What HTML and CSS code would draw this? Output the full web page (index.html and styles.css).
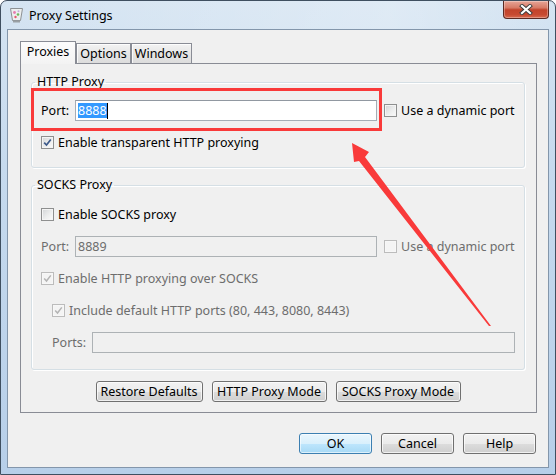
FILE: index.html
```html
<!DOCTYPE html>
<html>
<head>
<meta charset="utf-8">
<title>Proxy Settings</title>
<link rel="stylesheet" href="styles.css">
</head>
<body>
<div class="window">
  <div class="titlebar">
    <svg class="app-icon" width="13" height="16" viewBox="0 0 13 16">
      <path d="M0.5 1.5 L12.5 1.5 L10.5 13.5 L2.5 13.5 Z" fill="#ecefef" stroke="#8d9194"/>
      <rect x="3" y="13.5" width="7" height="2" fill="#9aa0a4"/>
      <circle cx="4.5" cy="5.5" r="1.4" fill="#e77fb0"/>
      <circle cx="8" cy="7.5" r="1.3" fill="#6dbb5b"/>
      <circle cx="5.5" cy="10" r="1.2" fill="#e55a6b"/>
      <circle cx="8.5" cy="4.2" r="1" fill="#c7a8d9"/>
    </svg>
    <span class="title">Proxy Settings</span>
    <div class="close">
      <svg width="14" height="11" viewBox="0 0 14 11">
        <path d="M3 2 L11 9 M11 2 L3 9" stroke="#3b3b3b" stroke-width="4" stroke-linecap="square"/>
        <path d="M3 2 L11 9 M11 2 L3 9" stroke="#ffffff" stroke-width="2.2" stroke-linecap="square"/>
      </svg>
    </div>
  </div>

  <div class="client">
    <div class="tabs">
      <div class="tabbar">
        <div class="tab active tab-proxies">Proxies</div>
        <div class="tab tab-options">Options</div>
        <div class="tab tab-windows">Windows</div>
      </div>
      <div class="pane">
        <fieldset class="group group-http">
          <legend>HTTP Proxy</legend>
          <div class="group-body">
            <div class="row">
              <span class="lbl lbl-port">Port:</span>
              <div class="input input-port"><span class="sel">8888</span><span class="caret"></span></div>
              <span class="cb cb-after"></span>
              <span class="cb-text">Use a dynamic port</span>
            </div>
            <div class="row">
              <span class="cb checked"><svg viewBox="0 0 11 11" width="11" height="11"><path d="M2.2 5.6 L4.5 8 L8.8 2.4" fill="none" stroke="#3d5a8a" stroke-width="1.7"/></svg></span>
              <span class="cb-text">Enable transparent HTTP proxying</span>
            </div>
          </div>
        </fieldset>

        <fieldset class="group group-socks">
          <legend>SOCKS Proxy</legend>
          <div class="group-body">
            <div class="row">
              <span class="cb"></span>
              <span class="cb-text">Enable SOCKS proxy</span>
            </div>
            <div class="row disabled">
              <span class="lbl lbl-port">Port:</span>
              <div class="input input-port">8889</div>
              <span class="cb cb-after"></span>
              <span class="cb-text">Use a dynamic port</span>
            </div>
            <div class="row disabled">
              <span class="cb checked"><svg viewBox="0 0 11 11" width="11" height="11"><path d="M2.2 5.6 L4.5 8 L8.8 2.4" fill="none" stroke="#b4b4b4" stroke-width="1.5"/></svg></span>
              <span class="cb-text">Enable HTTP proxying over SOCKS</span>
            </div>
            <div class="row disabled indent">
              <span class="cb checked"><svg viewBox="0 0 11 11" width="11" height="11"><path d="M2.2 5.6 L4.5 8 L8.8 2.4" fill="none" stroke="#b4b4b4" stroke-width="1.5"/></svg></span>
              <span class="cb-text">Include default HTTP ports (80, 443, 8080, 8443)</span>
            </div>
            <div class="row disabled indent">
              <span class="lbl lbl-ports">Ports:</span>
              <div class="input input-ports"></div>
            </div>
          </div>
        </fieldset>

        <div class="pane-buttons">
          <button class="btn btn-restore">Restore Defaults</button>
          <button class="btn btn-http">HTTP Proxy Mode</button>
          <button class="btn btn-socks">SOCKS Proxy Mode</button>
        </div>
      </div>
    </div>

    <div class="dialog-buttons">
      <button class="btn btn-dlg default">OK</button>
      <button class="btn btn-dlg">Cancel</button>
      <button class="btn btn-dlg">Help</button>
    </div>
  </div>

  <div class="annot-box"></div>
  <svg class="annot-arrow" width="556" height="475" viewBox="0 0 556 475">
    <polygon points="352,143 369,152 365,157 491,326 489,326 359,161 354,162" fill="#f93a3a"/>
  </svg>
</div>
</body>
</html>
```

FILE: styles.css
```css
* { box-sizing: border-box; }

body {
  margin: 0;
  font-family: "Noto Sans", "Open Sans", sans-serif;
  font-size: 12.5px;
  color: #000;
  background: #fff;
}

.window {
  position: relative;
  width: 556px;
  height: 475px;
  border: 1px solid #3f4f60;
  border-radius: 7px 7px 0 0;
  background: linear-gradient(to bottom, #d5e4f2 0%, #c6daee 35%, #b7cfe9 100%);
  display: flex;
  flex-direction: column;
  overflow: hidden;
}

.titlebar {
  height: 28px;
  display: flex;
  align-items: center;
  padding-left: 9px;
  background: linear-gradient(to right, rgba(255,255,255,0) 0%, rgba(255,255,255,0.25) 70%, rgba(255,255,255,0) 100%);
}

.app-icon { flex: none; }

.title {
  margin-left: 6px;
  font-size: 12.5px;
  color: #000;
}

.close {
  align-self: flex-start;
  margin-left: auto;
  margin-right: 6px;
  width: 46px;
  height: 18px;
  border: 1px solid #5b2a23;
  border-top: none;
  border-radius: 0 0 4px 4px;
  background: linear-gradient(to bottom, #e7a597 0%, #d77a66 40%, #c2432b 52%, #c74a31 80%, #d86a4f 100%);
  box-shadow: inset 0 0 0 1px rgba(255,255,255,0.3);
  display: flex;
  align-items: center;
  justify-content: center;
}

.client {
  flex: 1;
  margin: 0 6px 6px 6px;
  border: 1px solid #8396ab;
  background: #f0f0f0;
  display: flex;
  flex-direction: column;
}

.tabs {
  padding: 11px 11px 0 12px;
}

.tabbar {
  height: 22px;
  display: flex;
  align-items: flex-end;
}

.tab {
  height: 20px;
  border: 1px solid #898c95;
  border-bottom: none;
  display: flex;
  align-items: center;
  justify-content: center;
  padding-bottom: 1px;
  background: linear-gradient(to bottom, #f3f3f3 0%, #e6e6e6 50%, #dcdcdc 100%);
  box-shadow: inset 1px 1px 0 rgba(255,255,255,0.8);
}

.tab.active {
  height: 23px;
  margin-bottom: -1px;
  position: relative;
  z-index: 1;
  background: linear-gradient(to bottom, #fcfcfc 0%, #f3f3f3 100%);
  box-shadow: none;
  padding-bottom: 3px;
}

.tab-proxies { width: 56px; }
.tab-options { width: 55px; }
.tab-windows { width: 61px; }

.pane {
  border: 1px solid #898c95;
  padding: 0 11px 10px 10px;
  background: #f0f0f0;
}

.group {
  margin: 0;
  padding: 0;
  min-width: 0;
  border: 1px solid #d5dfe5;
  border-radius: 3px;
  box-shadow: inset 1px 1px 0 #fff, 1px 1px 0 #fff;
}

.group legend {
  margin-left: 3px;
  padding: 0 2px;
  line-height: 16px;
  height: 16px;
}

.group-http { margin-top: 10px; }
.group-socks { margin-top: 9px; }

.group-body {
  display: flex;
  flex-direction: column;
  gap: 11px;
  padding: 10px 9px 14px 9px;
}

.group-socks .group-body {
  padding: 11px 9px 16px 9px;
}

.row {
  height: 21px;
  display: flex;
  align-items: center;
  white-space: nowrap;
}

.row.indent { padding-left: 11px; }

.row.disabled { color: #6d6d6d; }

.lbl-port { width: 34px; }
.lbl-ports { width: 40px; }

.input {
  height: 21px;
  border: 1px solid #a5acb5;
  border-top-color: #9198a1;
  background: #fff;
  padding-left: 2px;
  display: flex;
  align-items: center;
}

.input-port { width: 302px; }
.input-ports { width: 423px; }

.row.disabled .input {
  background: #f0f0f0;
  border-color: #adb2b5;
}

.sel {
  background: #3399ff;
  color: #fff;
  height: 15px;
  line-height: 15px;
}

.caret {
  width: 1px;
  height: 16px;
  background: #000;
}

.cb {
  flex: none;
  width: 13px;
  height: 13px;
  border: 1px solid #8e8f8f;
  background: linear-gradient(135deg, #d2d4d6 0%, #eceded 55%, #fbfbfb 100%);
  box-shadow: inset 0 0 0 1px #f4f4f4;
  display: flex;
  align-items: center;
  justify-content: center;
}

.row.disabled .cb {
  border-color: #bcbcbc;
  background: #f4f4f4;
  box-shadow: inset 0 0 0 1px #f7f7f7;
}

.cb svg { display: block; }

.cb-after { margin-left: 7px; }

.cb-text { margin-left: 4px; }

.pane-buttons {
  margin-top: 11px;
  display: flex;
  justify-content: center;
  gap: 9px;
}

.btn {
  height: 21px;
  padding: 0;
  font-family: inherit;
  font-size: 12.5px;
  color: #000;
  border: 1px solid #707070;
  border-radius: 3px;
  background: linear-gradient(to bottom, #f2f2f2 0%, #ebebeb 50%, #dddddd 51%, #cfcfcf 100%);
  box-shadow: inset 0 0 0 1px rgba(255,255,255,0.7);
}

.btn-restore { width: 107px; }
.btn-http { width: 115px; }
.btn-socks { width: 125px; }

.dialog-buttons {
  margin-top: 20px;
  padding-right: 12px;
  display: flex;
  justify-content: flex-end;
  gap: 9px;
}

.btn-dlg { width: 73px; }

.btn.default {
  border-color: #3c7fb1;
  background: linear-gradient(to bottom, #eaf6fd 0%, #d9f0fc 50%, #bee6fd 51%, #a7d9f5 100%);
  box-shadow: inset 0 0 0 1px rgba(255,255,255,0.6);
}

.annot-box {
  position: absolute;
  left: 30px;
  top: 87px;
  width: 351px;
  height: 43px;
  border: 3px solid #f93a3a;
  pointer-events: none;
}

.annot-arrow {
  position: absolute;
  left: -1px;
  top: -1px;
  pointer-events: none;
}
```
